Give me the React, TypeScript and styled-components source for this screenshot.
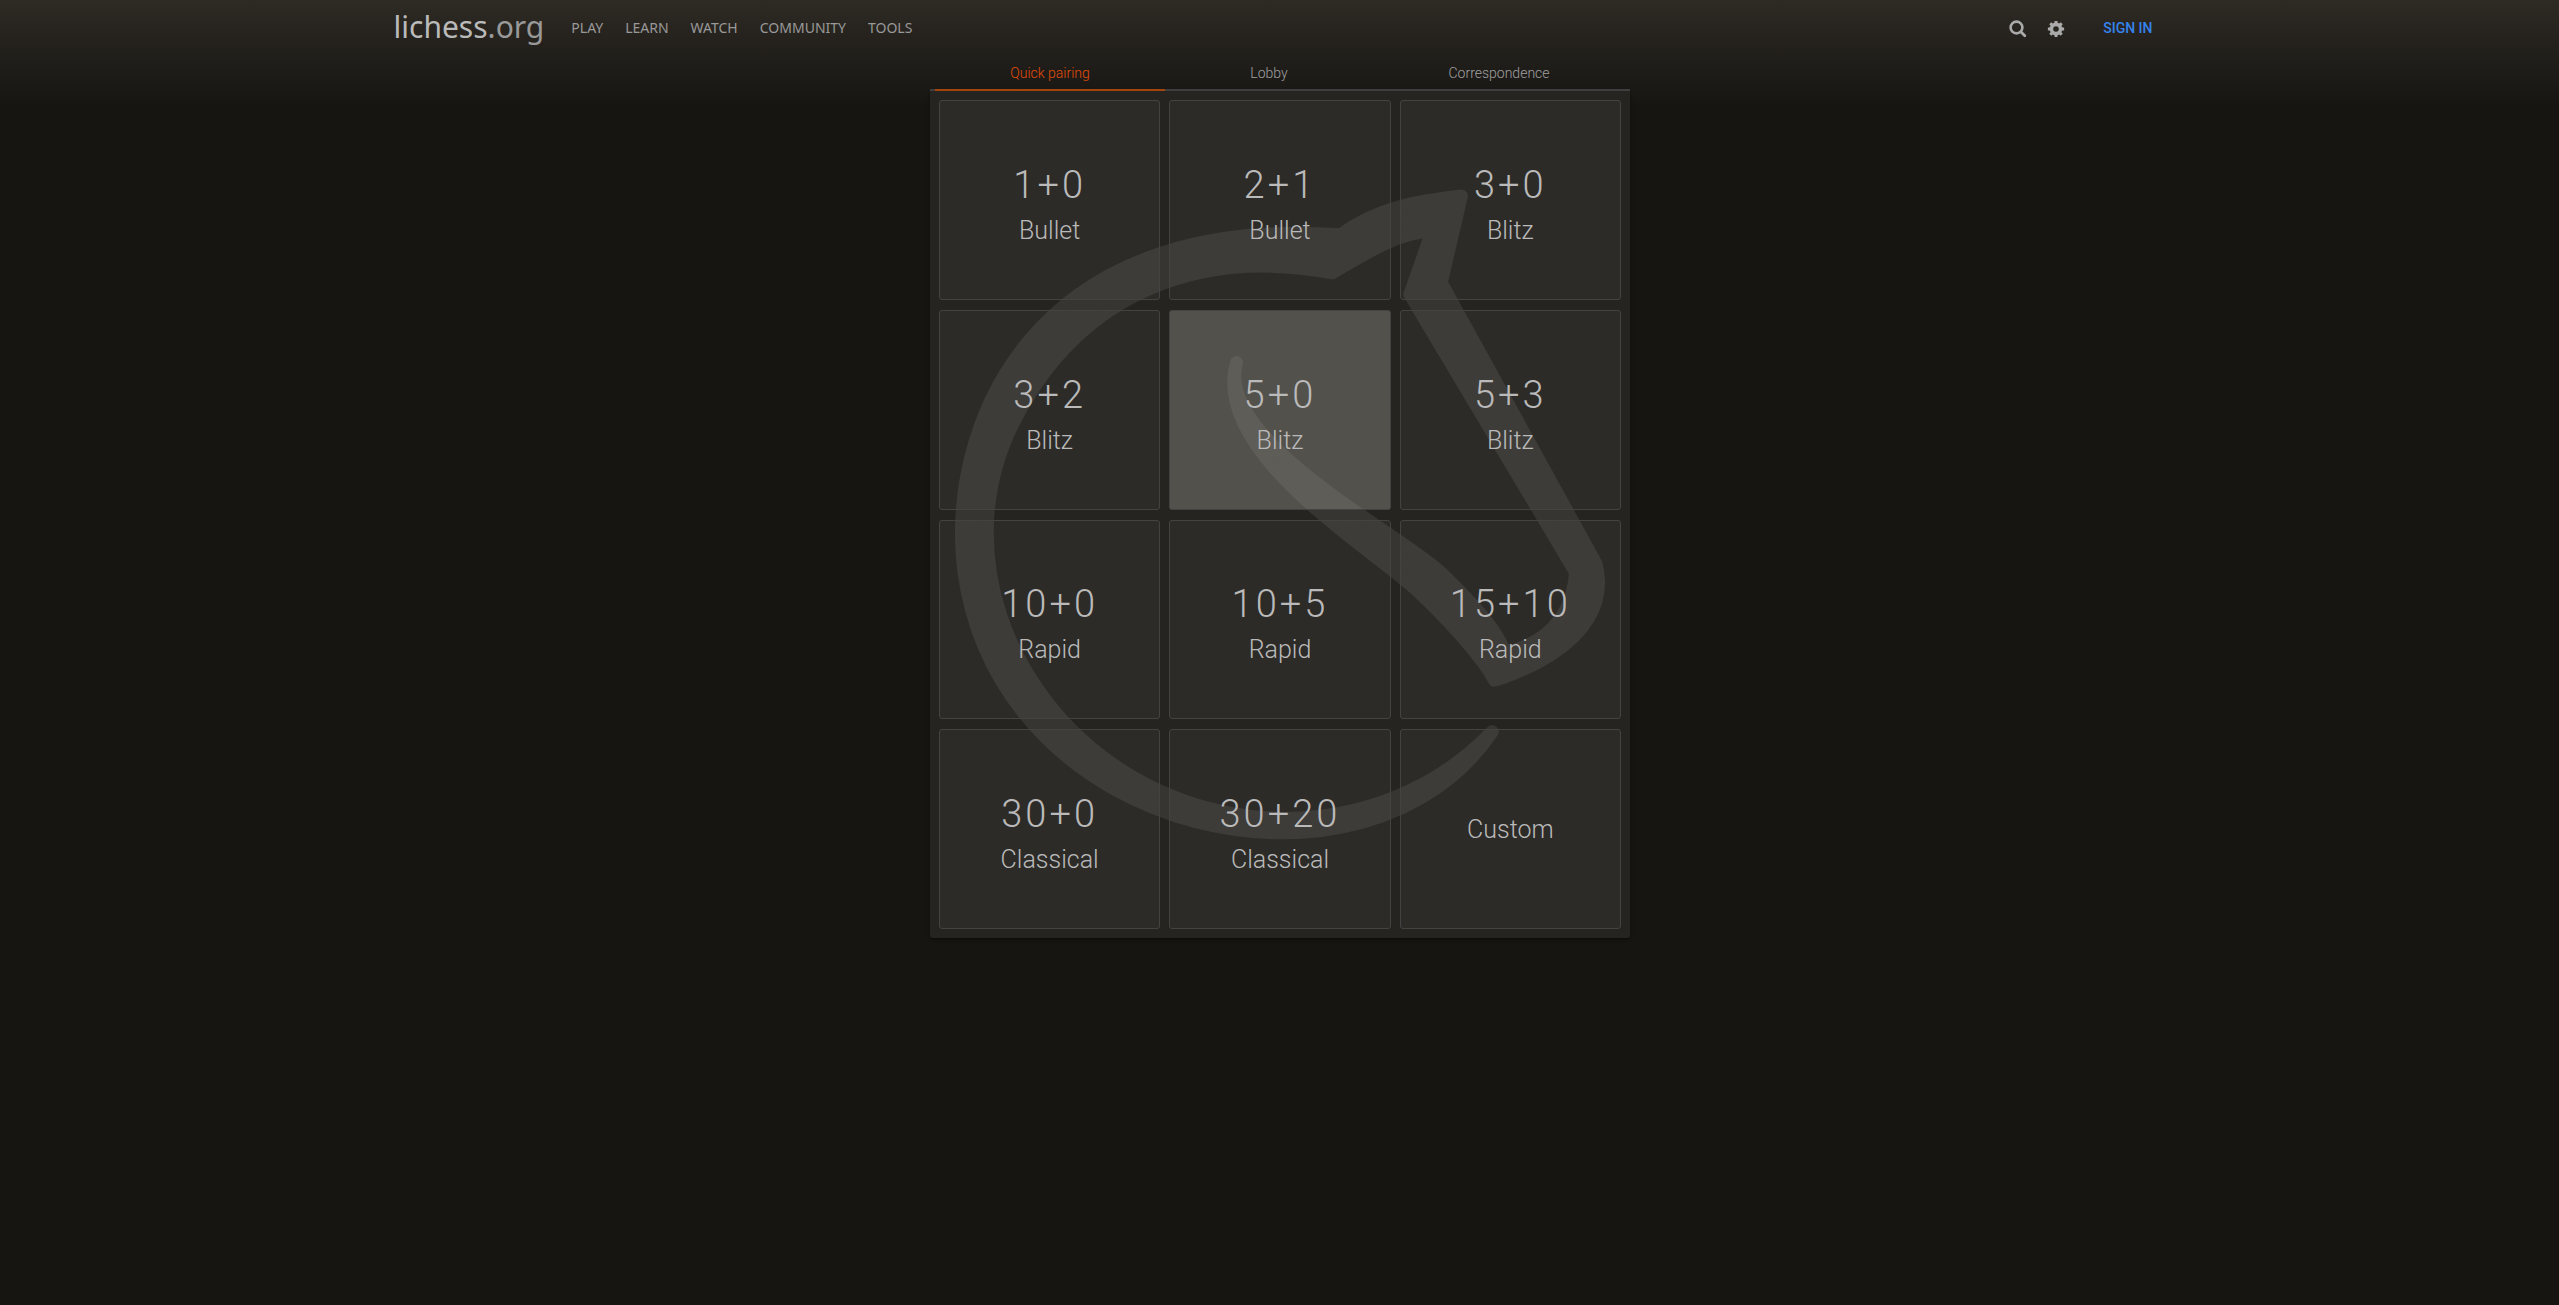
import React from 'react';
import styled, { createGlobalStyle } from 'styled-components';

const GlobalStyle = createGlobalStyle`
  *, *::before, *::after { box-sizing: border-box; }
  html { min-height: 100%; background: #161512; }
  body {
    margin: 0;
    min-height: 100vh;
    background: linear-gradient(to bottom, #2e2a24, #161512 108px) no-repeat #161512;
    color: #bababa;
    font: 300 14px/20px Roboto, "Noto Sans", sans-serif;
  }
  a { color: inherit; text-decoration: none; }
  button { font: inherit; color: inherit; background: none; border: 0; padding: 0; cursor: pointer; }
`;

const Header = styled.header`
  display: flex;
  align-items: center;
  justify-content: space-between;
  width: 100%;
  max-width: 1800px;
  height: 60px;
  margin: 0 auto;
  padding: 0 27px 7px 14px;
`;

const HeaderGroup = styled.div<{ $gap: number }>`
  display: flex;
  align-items: center;
  gap: ${(p) => p.$gap}px;
`;

const SiteTitle = styled.a`
  font: 400 30px/40px "Noto Sans", sans-serif;
  color: #bababa;
`;

const TitleSuffix = styled.span`
  color: #999999;
`;

const Nav = styled.nav`
  display: flex;
  gap: 22px;
  padding-top: 3px;
`;

const NavLink = styled.a`
  font: 400 14px/20px "Noto Sans", sans-serif;
  text-transform: uppercase;
  color: #999999;
`;

const IconButton = styled.button`
  display: flex;
  padding-top: 5px;
  color: #aaaaaa;
`;

const SignIn = styled.a`
  margin-left: 18px;
  padding-top: 3px;
  font-weight: 500;
  text-transform: uppercase;
  color: #3583ec;
`;

const Lobby = styled.main`
  width: 100%;
  max-width: 701px;
  margin: 0 auto;
  padding-left: 1px;
`;

const Tabs = styled.div`
  display: grid;
  grid-template-columns: 230fr 208fr 252fr;
  padding: 0 5px;
  background: linear-gradient(#404040, #404040) bottom / 100% 2px no-repeat;
`;

const Tab = styled.button<{ $active: boolean }>`
  padding: 3px 0 6px;
  border-bottom: 2px solid ${(p) => (p.$active ? '#a8470f' : 'transparent')};
  color: ${(p) => (p.$active ? '#e44c0a' : '#a0a0a0')};
`;

const Pools = styled.section`
  position: relative;
  display: grid;
  grid-template-columns: repeat(3, 1fr);
  grid-auto-rows: 1fr;
  gap: 10px 9px;
  min-height: 847px;
  padding: 9px;
  border-radius: 0 0 3px 3px;
  background: #262421;
  box-shadow: 0 2px 2px 0 rgba(0, 0, 0, 0.14), 0 3px 1px -2px rgba(0, 0, 0, 0.2),
    0 1px 5px 0 rgba(0, 0, 0, 0.12);
`;

const Watermark = styled.svg`
  position: absolute;
  inset: 25px;
  width: calc(100% - 50px);
  height: calc(100% - 50px);
  color: #373532;
  pointer-events: none;
`;

const Pool = styled.button<{ $hot: boolean }>`
  position: relative;
  display: flex;
  flex-direction: column;
  align-items: center;
  justify-content: center;
  padding-top: 1px;
  border: 1px solid #434343;
  border-radius: 3px;
  background: ${(p) => (p.$hot ? 'rgba(190, 184, 176, 0.3)' : 'rgba(255, 252, 245, 0.036)')};
`;

const Clock = styled.span`
  font-size: 38px;
  line-height: 60px;
  letter-spacing: 0.08em;
`;

const Perf = styled.span`
  padding-top: 1px;
  font-size: 25px;
  line-height: 30px;
`;

const KNIGHT =
  'M38.956.5c-3.53.418-6.452.902-9.286 2.984C5.534 1.786-.692 18.533.68 29.364 3.493 50.214 31.918 55.785 41.329 41.7c-7.444 7.696-19.276 8.752-28.323 3.084C3.959 39.116-.506 27.392 4.683 17.567 9.873 7.742 18.996 4.535 29.03 6.405c2.43-1.418 5.225-3.22 7.655-3.187l-1.694 4.86 12.752 21.37c-.439 5.654-5.459 6.112-5.459 6.112-.574-1.47-1.634-2.942-4.842-6.036-3.207-3.094-17.465-10.177-15.788-16.207-2.001 6.967 10.311 14.152 14.04 17.663 3.73 3.51 5.426 6.04 5.795 6.756 0 0 9.392-2.504 7.838-8.927L37.4 7.171z';

const SearchIcon = () => (
  <svg width="18" height="18" viewBox="0 0 18 18" fill="none" stroke="currentColor" aria-hidden="true">
    <circle cx="7.5" cy="7.5" r="5.9" strokeWidth="2.6" />
    <path d="M11.8 11.8l4 4" strokeWidth="2.8" strokeLinecap="round" />
  </svg>
);

const TEETH = [0, 45, 90, 135];

const GearIcon = () => (
  <svg width="18" height="18" viewBox="0 0 18 18" stroke="currentColor" fill="none" aria-hidden="true">
    <circle cx="9" cy="9" r="4.6" strokeWidth="3.6" />
    {TEETH.map((angle) => (
      <path key={angle} d="M9 .9v3M9 14.1v3" strokeWidth="3" transform={`rotate(${angle} 9 9)`} />
    ))}
  </svg>
);

const LINKS = ['Play', 'Learn', 'Watch', 'Community', 'Tools'];
const TABS = ['Quick pairing', 'Lobby', 'Correspondence'];
const HOT_POOL = '5+0';
const POOLS = [
  { clock: '1+0', perf: 'Bullet' },
  { clock: '2+1', perf: 'Bullet' },
  { clock: '3+0', perf: 'Blitz' },
  { clock: '3+2', perf: 'Blitz' },
  { clock: '5+0', perf: 'Blitz' },
  { clock: '5+3', perf: 'Blitz' },
  { clock: '10+0', perf: 'Rapid' },
  { clock: '10+5', perf: 'Rapid' },
  { clock: '15+10', perf: 'Rapid' },
  { clock: '30+0', perf: 'Classical' },
  { clock: '30+20', perf: 'Classical' },
  { clock: '', perf: 'Custom' },
];

export default function App() {
  const [tab, setTab] = React.useState(TABS[0]);
  return (
    <>
      <GlobalStyle />
      <Header>
        <HeaderGroup $gap={27}>
          <SiteTitle href="#">
            lichess<TitleSuffix>.org</TitleSuffix>
          </SiteTitle>
          <Nav>
            {LINKS.map((link) => (
              <NavLink key={link} href="#">
                {link}
              </NavLink>
            ))}
          </Nav>
        </HeaderGroup>
        <HeaderGroup $gap={20}>
          <IconButton aria-label="Search">
            <SearchIcon />
          </IconButton>
          <IconButton aria-label="Preferences">
            <GearIcon />
          </IconButton>
          <SignIn href="#">Sign in</SignIn>
        </HeaderGroup>
      </Header>
      <Lobby>
        <Tabs role="tablist">
          {TABS.map((name) => (
            <Tab key={name} role="tab" aria-selected={name === tab} $active={name === tab} onClick={() => setTab(name)}>
              {name}
            </Tab>
          ))}
        </Tabs>
        <Pools>
          <Watermark viewBox="0 0 50 50" fill="currentColor" stroke="currentColor" strokeLinejoin="round" aria-hidden="true">
            <path d={KNIGHT} />
          </Watermark>
          {POOLS.map(({ clock, perf }) => (
            <Pool key={clock + perf} $hot={clock === HOT_POOL}>
              {clock && <Clock>{clock}</Clock>}
              <Perf>{perf}</Perf>
            </Pool>
          ))}
        </Pools>
      </Lobby>
    </>
  );
}
